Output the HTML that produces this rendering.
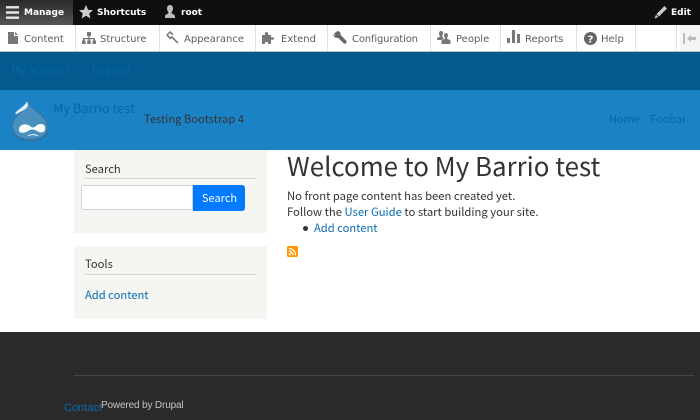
<!DOCTYPE html>
<html><head><meta charset="utf-8">
<style>
html,body{margin:0;padding:0;width:700px;height:420px;overflow:hidden;background:#fff}
.a{position:absolute}
.t{position:absolute;white-space:nowrap;line-height:1}
.v{font-family:"DejaVu Sans",sans-serif}
.s{font-family:"Noto Sans CJK JP","Liberation Sans",sans-serif}
.bar{font-size:9px;font-weight:bold;color:#fff;top:9px}
.nav{font-size:10px;color:#5c5c5c;top:35px}
.sep{position:absolute;top:25px;width:1px;height:26px;background:#e0e0e0}
svg{position:absolute;overflow:visible}
</style></head>
<body>
<div class="a" style="left:0;top:0;width:73px;height:25px"></div>
<div class="a" style="left:0;top:0;width:700px;height:25px;background:#0f0f0f"></div>
<div class="a" style="left:0;top:0;width:73px;height:25px;background:linear-gradient(#2a2a2a,#555)"></div>
<svg style="left:6px;top:6px" width="14" height="14"><path d="M0 1.300h13M0 6.500h13M0 11.700h13" stroke="#e8e8e8" stroke-width="2.400" fill="none"/></svg>
<div class="t v bar" style="left:24px">Manage</div>
<svg style="left:79px;top:5px" width="14" height="14"><path d="M7 0l2 4.800 5 .4-3.800 3.300 1.200 5-4.400-2.700-4.400 2.700 1.200-5L0 5.200l5-.4z" fill="#ccc"/></svg>
<div class="t v bar" style="left:97px">Shortcuts</div>
<svg style="left:163px;top:5px" width="14" height="14"><path d="M7 0c2 0 3 1.500 3 3.500 0 2-1 3-1.500 4 0 1.500 3.500 2 3.500 3.500V13H2v-2c0-1.500 3.500-2 3.500-3.500C5 6.500 4 5.500 4 3.500 4 1.500 5 0 7 0z" fill="#bbb"/></svg>
<div class="t v bar" style="left:181px">root</div>
<svg style="left:654px;top:6px" width="14" height="13"><path d="M10.500 0L13 2.500 5 10.500 2.500 8zM2 8.700L4.300 11 .5 12.500z" fill="#ccc"/></svg>
<div class="t v bar" style="left:671px">Edit</div>

<div class="a" style="left:0;top:25px;width:700px;height:26px;background:#fff;border-bottom:1px solid #bfbfbf"></div>
<div class="a" style="left:680px;top:25px;width:20px;height:26px;background:#f5f5f5"></div>
<div class="sep" style="left:75px"></div><div class="sep" style="left:159px"></div><div class="sep" style="left:255px"></div><div class="sep" style="left:327px"></div><div class="sep" style="left:430px"></div><div class="sep" style="left:500px"></div><div class="sep" style="left:576px"></div><div class="sep" style="left:635px"></div><div class="sep" style="left:676px"></div>
<svg style="left:8px;top:32px" width="10" height="12"><path d="M0 0h6v4h4v8H0zM7 0l3 3H7z" fill="#777"/></svg>
<div class="t v nav" style="left:24px">Content</div>
<svg style="left:82px;top:32px" width="14" height="12"><path d="M5 0h4v4H5zM6.300 4h1.400v2H13v2.500h-1.400V7.200H7.700v1.300H6.300V7.200H2.400v1.300H1V6h5.300zM0 8.500h3.500V12H0zM5.200 8.500h3.600V12H5.200zM10.500 8.500H14V12h-3.500z" fill="#777"/></svg>
<div class="t v nav" style="left:100px">Structure</div>
<svg style="left:166px;top:31px" width="13" height="13"><path d="M0 4L4 0l3.500 3-1.200 1.200L4 2 2 4l2.500 2.300L6 5l6.500 6.500-1 1L5.500 7 4 8.500z" fill="#777"/></svg>
<div class="t v nav" style="left:184px">Appearance</div>
<svg style="left:262px;top:32px" width="13" height="12"><path d="M0 3h3c-.5-1.500 0-3 1.500-3S6.500 1.500 6 3h3v2.500c1.500-.5 3-.5 3 1s-1.500 1.500-3 1V12H6c.5-1 0-2-1.500-2S2.500 11 3 12H0z" fill="#777"/></svg>
<div class="t v nav" style="left:281px">Extend</div>
<svg style="left:333px;top:31px" width="14" height="14"><path d="M1 3L3 1l1-.8c2-.5 4 1 3.500 3.500L13 9.500c.8 1 .8 1.800.1 2.600-.8.800-1.800.8-2.600 0L5 6.700C3 7.300.5 6 .2 3.500L3 5z" fill="#666"/></svg>
<div class="t v nav" style="left:352px;letter-spacing:-.15px">Configuration</div>
<svg style="left:437px;top:31px" width="14" height="14"><path d="M4 0c1.500 0 2 1 2 2.500S5 5 5 5.500c0 .5 1 1 2 1.500l-2 2H0V7.500c0-1 3-1.500 3-2S2 3.800 2 2.500 2.500 0 4 0z" fill="#777"/><path d="M9 2c1.500 0 2 1.200 2 2.500S10 7 10 7.500c0 .8 3.500 1 3.500 2.500V13h-9v-3C4.500 8.500 8 8.300 8 7.500S7 5.800 7 4.500 7.500 2 9 2z" fill="#777"/></svg>
<div class="t v nav" style="left:456px">People</div>
<svg style="left:507px;top:30px" width="13" height="14"><path d="M0 8h3v5H0zM5 0h3v13H5zM10 4h3v9h-3z" fill="#777"/></svg>
<div class="t v nav" style="left:525px">Reports</div>
<svg style="left:584px;top:32px" width="13" height="13"><circle cx="6.500" cy="6.500" r="6.500" fill="#666"/><text x="6.500" y="10.500" font-size="10" font-weight="bold" font-family="DejaVu Sans" text-anchor="middle" fill="#fff">?</text></svg>
<div class="t v nav" style="left:601px">Help</div>
<svg style="left:683px;top:33px" width="14" height="11"><path d="M0 0h2v11H0z" fill="#bbb"/><path d="M4 5.500L8 2v2h5v3H8v2z" fill="#bbb"/></svg>

<div class="a" style="left:0;top:52px;width:700px;height:38px;background:#035a8e"></div>
<div class="a" style="left:0;top:90px;width:700px;height:60px;background:#1b83c5"></div>
<div class="t s" style="left:11px;top:65px;font-size:11px;color:#0468a8">My account</div>
<div class="t s" style="left:92px;top:65px;font-size:11px;color:#0468a8">Log out</div>
<svg style="left:0;top:0" width="60" height="150">
<path d="M28 99C28 105 34 108 40 113C46 118 49 123 49 129C49 137 41 142 30 142C19 142 12 136 12 127C12 120 16 115 21 111C25 108 27 105 28 99Z" fill="#2f75a6"/>
<path d="M28 101C28 106 34 109 39 114C45 119 48 124 47 129C46 136 39 139 30 139C20 139 13 134 13 127C13 120 17 116 22 112C25 109 27 106 28 101Z" fill="#4a90bf"/>
<path d="M27 101C26 105 20 108 16 112C15 114 15 115 17 114C21 111 27 110 28 105Z" fill="#dcedf6"/>
<path d="M19 130C19 124 26 123 30 126C32 128 34 128 36 126C39 123 46 123 45 129C45 133 40 133 37 131C34 129 31 129 28 131C25 133 19 134 19 130Z" fill="#fff"/>
<path d="M28 136C31 134 35 134 38 136" stroke="#e8f2f8" stroke-width="1" fill="none"/>
</svg>
<div class="t s" style="left:53px;top:102px;font-size:12.800px;color:#0468a8">My Barrio test</div>
<div class="t s" style="left:144px;top:114px;font-size:11.200px;color:#333">Testing Bootstrap 4</div>
<div class="t s" style="left:609px;top:114px;font-size:11px;color:#0468a8">Home</div>
<div class="t s" style="left:650px;top:114px;font-size:11px;color:#0468a8">Foobar</div>

<div class="a" style="left:74px;top:150px;width:193px;height:83px;background:#f5f5f2"></div>
<div class="t s" style="left:85px;top:164px;font-size:11.200px;color:#333">Search</div>
<div class="a" style="left:85px;top:178px;width:171px;height:1px;background:#d5d5d5"></div>
<div class="a" style="left:81px;top:185px;width:110px;height:23px;background:#fff;border:1px solid #ced4da;border-radius:3px 0 0 3px"></div>
<div class="a" style="left:193px;top:185px;width:52px;height:26px;background:#007bff;border-radius:0 3px 3px 0"></div>
<div class="t s" style="left:202px;top:193px;font-size:11px;color:#fff">Search</div>
<div class="a" style="left:74px;top:246px;width:193px;height:73px;background:#f5f5f2"></div>
<div class="t s" style="left:85px;top:259px;font-size:11.200px;color:#333">Tools</div>
<div class="a" style="left:85px;top:274px;width:171px;height:1px;background:#d5d5d5"></div>
<div class="t s" style="left:85px;top:290px;font-size:11.200px;color:#0b6cb0">Add content</div>

<div class="t s" style="left:287px;top:153px;font-size:25.900px;color:#333">Welcome to My Barrio test</div>
<div class="t s" style="left:287px;top:191px;font-size:11.270px;color:#333">No front page content has been created yet.</div>
<div class="t s" style="left:287px;top:207px;font-size:11.270px;color:#333">Follow the <span style="color:#0b6cb0">User Guide</span> to start building your site.</div>
<div class="a" style="left:303px;top:226px;width:5px;height:5px;border-radius:50%;background:#333"></div>
<div class="t s" style="left:314px;top:223px;font-size:11.200px;color:#0b6cb0">Add content</div>
<svg style="left:287px;top:246px" width="11" height="11"><rect width="11" height="11" rx="1.500" fill="#f90"/><circle cx="2.800" cy="8.200" r="1.200" fill="#fff"/><path d="M1.800 5a4.200 4.200 0 0 1 4.200 4.200M1.800 2.500a6.700 6.700 0 0 1 6.700 6.700" stroke="#fff" stroke-width="1.300" fill="none"/></svg>

<div class="a" style="left:0;top:332px;width:700px;height:88px;background:#2a2a2a"></div>
<div class="a" style="left:74px;top:375px;width:620px;height:1px;background:#444"></div>
<div class="t" style="left:64px;top:403px;font-size:11px;font-family:'Liberation Sans',sans-serif;color:#0b6cb0">Contact</div>
<div class="t" style="left:101px;top:401px;font-size:10px;letter-spacing:-.15px;font-family:'Liberation Sans',sans-serif;color:#c4c4c4">Powered by Drupal</div>
</body></html>
